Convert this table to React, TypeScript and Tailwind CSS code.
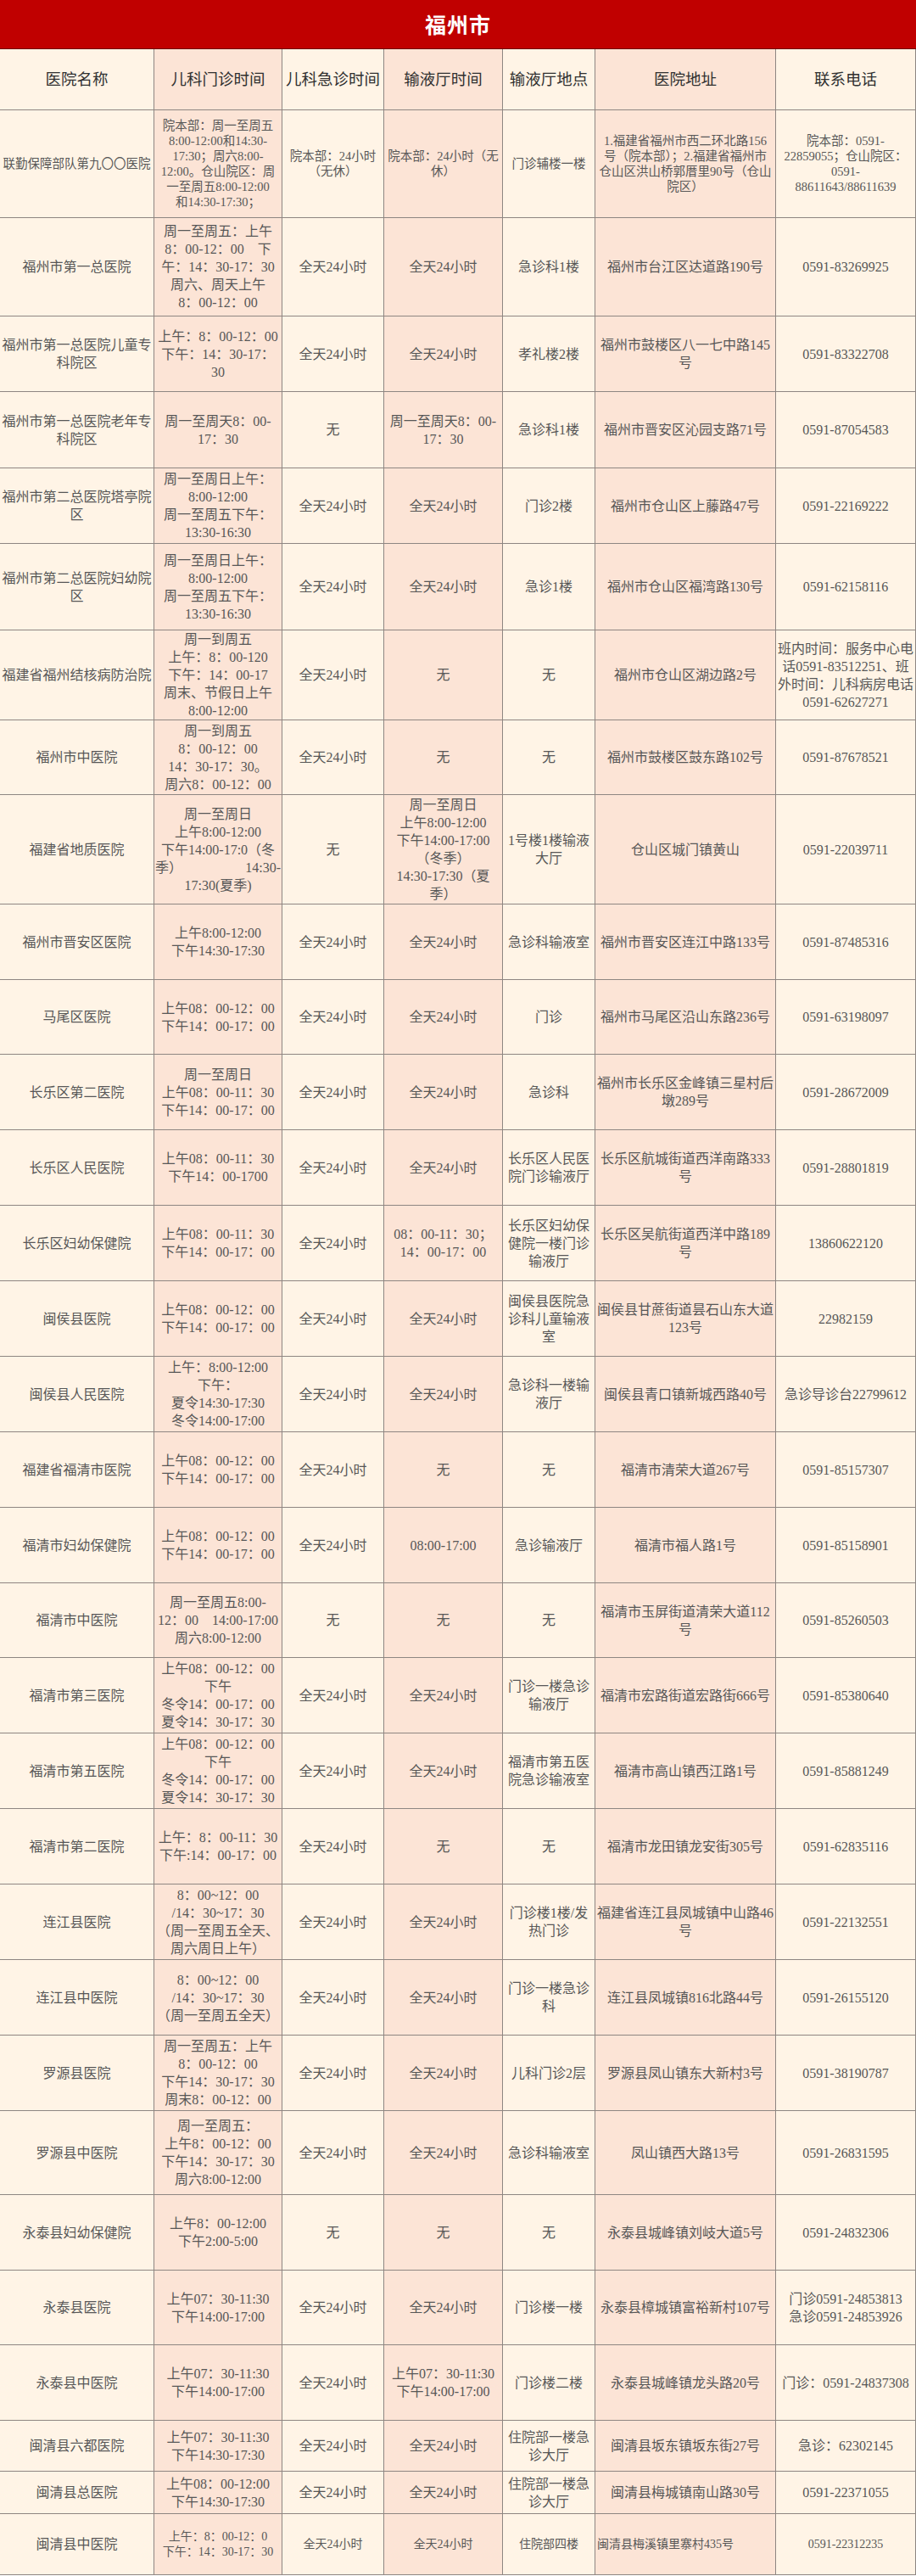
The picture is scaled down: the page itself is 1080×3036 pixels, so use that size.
import React from "react";

type Row = {
  h: string;
  v?: "r1" | "last";
  c: string[];
  left6?: boolean;
};

const rows: Row[] = [
  {
    h: "h-[127px]",
    v: "r1",
    c: [
      "联勤保障部队第九〇〇医院",
      "院本部：周一至周五\n8:00-12:00和14:30-\n17:30；周六8:00-\n12:00。仓山院区：周\n一至周五8:00-12:00\n和14:30-17:30；",
      "院本部：24小时\n（无休）",
      "院本部：24小时（无\n休）",
      "门诊辅楼一楼",
      "1.福建省福州市西二环北路156\n号（院本部）；2.福建省福州市\n仓山区洪山桥郭厝里90号（仓山\n院区）",
      "院本部：0591-\n22859055；仓山院区：\n0591-\n88611643/88611639",
    ],
  },
  {
    h: "h-[116px]",
    c: [
      "福州市第一总医院",
      "周一至周五：上午\n8：00-12：00　下\n午：14：30-17：30\n周六、周天上午\n8：00-12：00",
      "全天24小时",
      "全天24小时",
      "急诊科1楼",
      "福州市台江区达道路190号",
      "0591-83269925",
    ],
  },
  {
    h: "h-[89px]",
    c: [
      "福州市第一总医院儿童专\n科院区",
      "上午：8：00-12：00\n下午：14：30-17：\n30",
      "全天24小时",
      "全天24小时",
      "孝礼楼2楼",
      "福州市鼓楼区八一七中路145\n号",
      "0591-83322708",
    ],
  },
  {
    h: "h-[90px]",
    c: [
      "福州市第一总医院老年专\n科院区",
      "周一至周天8：00-\n17：30",
      "无",
      "周一至周天8：00-\n17：30",
      "急诊科1楼",
      "福州市晋安区沁园支路71号",
      "0591-87054583",
    ],
  },
  {
    h: "h-[89px]",
    c: [
      "福州市第二总医院塔亭院\n区",
      "周一至周日上午：\n8:00-12:00\n周一至周五下午：\n13:30-16:30",
      "全天24小时",
      "全天24小时",
      "门诊2楼",
      "福州市仓山区上藤路47号",
      "0591-22169222",
    ],
  },
  {
    h: "h-[102px]",
    c: [
      "福州市第二总医院妇幼院\n区",
      "周一至周日上午：\n8:00-12:00\n周一至周五下午：\n13:30-16:30",
      "全天24小时",
      "全天24小时",
      "急诊1楼",
      "福州市仓山区福湾路130号",
      "0591-62158116",
    ],
  },
  {
    h: "h-[106px]",
    c: [
      "福建省福州结核病防治院",
      "周一到周五\n上午：8：00-120\n下午：14：00-17\n周末、节假日上午\n8:00-12:00",
      "全天24小时",
      "无",
      "无",
      "福州市仓山区湖边路2号",
      "班内时间：服务中心电\n话0591-83512251、班\n外时间：儿科病房电话\n0591-62627271",
    ],
  },
  {
    h: "h-[88px]",
    c: [
      "福州市中医院",
      "周一到周五\n8：00-12：00\n14：30-17：30。\n周六8：00-12：00",
      "全天24小时",
      "无",
      "无",
      "福州市鼓楼区鼓东路102号",
      "0591-87678521",
    ],
  },
  {
    h: "h-[129px]",
    c: [
      "福建省地质医院",
      "周一至周日\n上午8:00-12:00\n下午14:00-17:0（冬\n季）|14:30-\n17:30(夏季)",
      "无",
      "周一至周日\n上午8:00-12:00\n下午14:00-17:00\n（冬季）\n14:30-17:30（夏\n季）",
      "1号楼1楼输液\n大厅",
      "仓山区城门镇黄山",
      "0591-22039711",
    ],
  },
  {
    h: "h-[89px]",
    c: [
      "福州市晋安区医院",
      "上午8:00-12:00\n下午14:30-17:30",
      "全天24小时",
      "全天24小时",
      "急诊科输液室",
      "福州市晋安区连江中路133号",
      "0591-87485316",
    ],
  },
  {
    h: "h-[88px]",
    c: [
      "马尾区医院",
      "上午08：00-12：00\n下午14：00-17：00",
      "全天24小时",
      "全天24小时",
      "门诊",
      "福州市马尾区沿山东路236号",
      "0591-63198097",
    ],
  },
  {
    h: "h-[89px]",
    c: [
      "长乐区第二医院",
      "周一至周日\n上午08：00-11：30\n下午14：00-17：00",
      "全天24小时",
      "全天24小时",
      "急诊科",
      "福州市长乐区金峰镇三星村后\n墩289号",
      "0591-28672009",
    ],
  },
  {
    h: "h-[89px]",
    c: [
      "长乐区人民医院",
      "上午08：00-11：30\n下午14：00-1700",
      "全天24小时",
      "全天24小时",
      "长乐区人民医\n院门诊输液厅",
      "长乐区航城街道西洋南路333\n号",
      "0591-28801819",
    ],
  },
  {
    h: "h-[89px]",
    c: [
      "长乐区妇幼保健院",
      "上午08：00-11：30\n下午14：00-17：00",
      "全天24小时",
      "08：00-11：30；\n14：00-17：00",
      "长乐区妇幼保\n健院一楼门诊\n输液厅",
      "长乐区吴航街道西洋中路189\n号",
      "13860622120",
    ],
  },
  {
    h: "h-[89px]",
    c: [
      "闽侯县医院",
      "上午08：00-12：00\n下午14：00-17：00",
      "全天24小时",
      "全天24小时",
      "闽侯县医院急\n诊科儿童输液\n室",
      "闽侯县甘蔗街道昙石山东大道\n123号",
      "22982159",
    ],
  },
  {
    h: "h-[89px]",
    c: [
      "闽侯县人民医院",
      "上午：8:00-12:00\n下午：\n夏令14:30-17:30\n冬令14:00-17:00",
      "全天24小时",
      "全天24小时",
      "急诊科一楼输\n液厅",
      "闽侯县青口镇新城西路40号",
      "急诊导诊台22799612",
    ],
  },
  {
    h: "h-[89px]",
    c: [
      "福建省福清市医院",
      "上午08：00-12：00\n下午14：00-17：00",
      "全天24小时",
      "无",
      "无",
      "福清市清荣大道267号",
      "0591-85157307",
    ],
  },
  {
    h: "h-[89px]",
    c: [
      "福清市妇幼保健院",
      "上午08：00-12：00\n下午14：00-17：00",
      "全天24小时",
      "08:00-17:00",
      "急诊输液厅",
      "福清市福人路1号",
      "0591-85158901",
    ],
  },
  {
    h: "h-[88px]",
    c: [
      "福清市中医院",
      "周一至周五8:00-\n12：00　14:00-17:00\n周六8:00-12:00",
      "无",
      "无",
      "无",
      "福清市玉屏街道清荣大道112\n号",
      "0591-85260503",
    ],
  },
  {
    h: "h-[89px]",
    c: [
      "福清市第三医院",
      "上午08：00-12：00\n下午\n冬令14：00-17：00\n夏令14：30-17：30",
      "全天24小时",
      "全天24小时",
      "门诊一楼急诊\n输液厅",
      "福清市宏路街道宏路街666号",
      "0591-85380640",
    ],
  },
  {
    h: "h-[89px]",
    c: [
      "福清市第五医院",
      "上午08：00-12：00\n下午\n冬令14：00-17：00\n夏令14：30-17：30",
      "全天24小时",
      "全天24小时",
      "福清市第五医\n院急诊输液室",
      "福清市高山镇西江路1号",
      "0591-85881249",
    ],
  },
  {
    h: "h-[89px]",
    c: [
      "福清市第二医院",
      "上午：8：00-11：30\n下午:14：00-17：00",
      "全天24小时",
      "无",
      "无",
      "福清市龙田镇龙安街305号",
      "0591-62835116",
    ],
  },
  {
    h: "h-[89px]",
    c: [
      "连江县医院",
      "8：00~12：00\n/14：30~17：30\n（周一至周五全天、\n周六周日上午）",
      "全天24小时",
      "全天24小时",
      "门诊楼1楼/发\n热门诊",
      "福建省连江县凤城镇中山路46\n号",
      "0591-22132551",
    ],
  },
  {
    h: "h-[89px]",
    c: [
      "连江县中医院",
      "8：00~12：00\n/14：30~17：30\n（周一至周五全天）",
      "全天24小时",
      "全天24小时",
      "门诊一楼急诊\n科",
      "连江县凤城镇816北路44号",
      "0591-26155120",
    ],
  },
  {
    h: "h-[89px]",
    c: [
      "罗源县医院",
      "周一至周五：上午\n8：00-12：00\n下午14：30-17：30\n周末8：00-12：00",
      "全天24小时",
      "全天24小时",
      "儿科门诊2层",
      "罗源县凤山镇东大新村3号",
      "0591-38190787",
    ],
  },
  {
    h: "h-[99px]",
    c: [
      "罗源县中医院",
      "周一至周五：\n上午8：00-12：00\n下午14：30-17：30\n周六8:00-12:00",
      "全天24小时",
      "全天24小时",
      "急诊科输液室",
      "凤山镇西大路13号",
      "0591-26831595",
    ],
  },
  {
    h: "h-[89px]",
    c: [
      "永泰县妇幼保健院",
      "上午8：00-12:00\n下午2:00-5:00",
      "无",
      "无",
      "无",
      "永泰县城峰镇刘岐大道5号",
      "0591-24832306",
    ],
  },
  {
    h: "h-[88px]",
    c: [
      "永泰县医院",
      "上午07：30-11:30\n下午14:00-17:00",
      "全天24小时",
      "全天24小时",
      "门诊楼一楼",
      "永泰县樟城镇富裕新村107号",
      "门诊0591-24853813\n急诊0591-24853926",
    ],
  },
  {
    h: "h-[89px]",
    c: [
      "永泰县中医院",
      "上午07：30-11:30\n下午14:00-17:00",
      "全天24小时",
      "上午07：30-11:30\n下午14:00-17:00",
      "门诊楼二楼",
      "永泰县城峰镇龙头路20号",
      "门诊：0591-24837308",
    ],
  },
  {
    h: "h-[60px]",
    c: [
      "闽清县六都医院",
      "上午07：30-11:30\n下午14:30-17:30",
      "全天24小时",
      "全天24小时",
      "住院部一楼急\n诊大厅",
      "闽清县坂东镇坂东街27号",
      "急诊：62302145",
    ],
  },
  {
    h: "h-[50px]",
    c: [
      "闽清县总医院",
      "上午08：00-12:00\n下午14:30-17:30",
      "全天24小时",
      "全天24小时",
      "住院部一楼急\n诊大厅",
      "闽清县梅城镇南山路30号",
      "0591-22371055",
    ],
  },
  {
    h: "h-[72px]",
    v: "last",
    left6: true,
    c: [
      "闽清县中医院",
      "上午：8：00-12：0\n下午：14：30-17：30",
      "全天24小时",
      "全天24小时",
      "住院部四楼",
      "闽清县梅溪镇里寨村435号",
      "0591-22312235",
    ],
  },
];

const headers = ["医院名称", "儿科门诊时间", "儿科急诊时间", "输液厅时间", "输液厅地点", "医院地址", "联系电话"];

const gridCols = "grid grid-cols-[182px_151px_120px_140px_109px_213px_165px]";

function bgFor(i: number) {
  return i % 2 === 1 ? "bg-[#fce4d6]" : "bg-[#fff4e6]";
}

function Lines({ text }: { text: string }) {
  return (
    <>
      {text.split("\n").map((ln, k) =>
        ln.includes("|") ? (
          <div key={k} className="flex w-full justify-between whitespace-nowrap">
            {ln.split("|").map((p, j) => (
              <span key={j}>{p}</span>
            ))}
          </div>
        ) : (
          <div key={k} className="whitespace-nowrap">
            {ln}
          </div>
        )
      )}
    </>
  );
}

function DataRow({ row }: { row: Row }) {
  return (
    <div className={`${gridCols} ${row.h}`}>
      {row.c.map((text, i) => {
        let size = "text-[16px] leading-[21px]";
        if (row.v === "r1") size = "text-[14.5px] leading-[18px]";
        if (row.v === "last" && i > 0) size = "text-[14px] leading-[18px]";
        const align =
          row.left6 && i === 5 ? "items-start text-left pl-[2px]" : "items-center text-center";
        return (
          <div
            key={i}
            className={`${bgFor(i)} ${size} ${align} flex flex-col justify-center overflow-hidden border-r border-b border-[#8e8682] px-[1px] text-[#575757]`}
          >
            <Lines text={text} />
          </div>
        );
      })}
    </div>
  );
}

export default function App() {
  return (
    <div className="w-[1080px] font-['Liberation_Serif','Noto_Sans_CJK_SC',serif]">
      <div className="flex h-[58px] items-center justify-center border-b border-[#6e0000] bg-[#c00000]">
        <span className="text-[25px] font-bold tracking-[1px] text-white font-['Noto_Sans_CJK_SC',sans-serif]">
          福州市
        </span>
      </div>
      <div className={`${gridCols} h-[72px]`}>
        {headers.map((h, i) => (
          <div
            key={i}
            className={`${bgFor(i)} flex items-center justify-center border-r border-b border-[#8e8682] text-[18.5px] leading-[24px] whitespace-nowrap text-[#303030]`}
          >
            {h}
          </div>
        ))}
      </div>
      {rows.map((r, i) => (
        <DataRow key={i} row={r} />
      ))}
    </div>
  );
}
